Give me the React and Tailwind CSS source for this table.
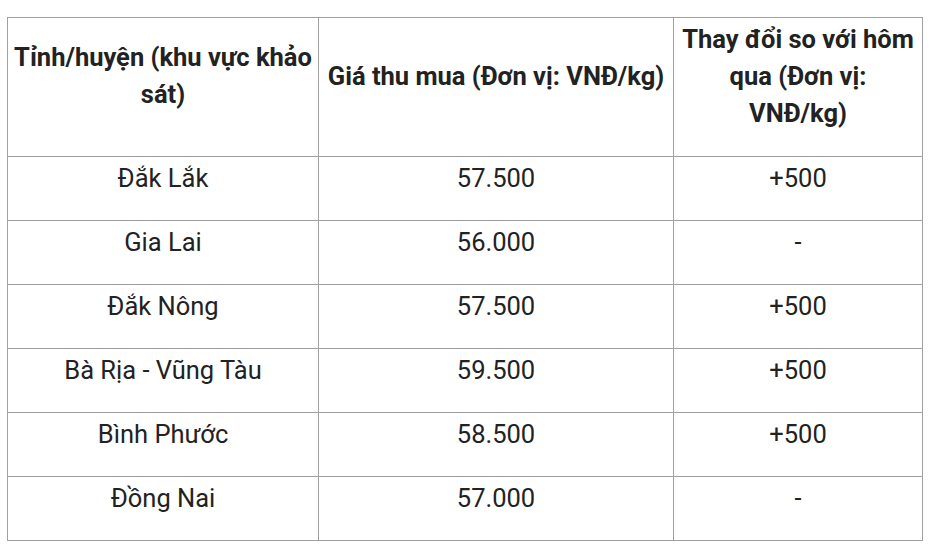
const rows = [
  ['Đắk Lắk', '57.500', '+500'],
  ['Gia Lai', '56.000', '-'],
  ['Đắk Nông', '57.500', '+500'],
  ['Bà Rịa - Vũng Tàu', '59.500', '+500'],
  ['Bình Phước', '58.500', '+500'],
  ['Đồng Nai', '57.000', '-'],
];

export default function App() {
  return (
    <div
      className="w-[933px] h-[546px] bg-white pl-[7px] pt-[17px] text-[#222]"
      style={{ fontFamily: 'Roboto, "Noto Sans", sans-serif' }}
    >
      <table className="w-[915px] table-fixed border-collapse">
        <colgroup>
          <col className="w-[311px]" />
          <col className="w-[355px]" />
          <col className="w-[249px]" />
        </colgroup>
        <thead>
          <tr className="h-[139px]">
            <th className="border border-[#a0a0a0] px-1 pt-[2px] pb-[24px] text-[25.5px] leading-[37px] font-bold text-center align-middle">
              Tỉnh/huyện (khu vực khảo sát)
            </th>
            <th className="border border-[#a0a0a0] px-1 pt-[2px] pb-[24px] text-[25.5px] leading-[37px] font-bold text-center align-middle">
              Giá thu mua (Đơn vị: VNĐ/kg)
            </th>
            <th className="border border-[#a0a0a0] px-1 pt-[2px] pb-[24px] text-[25.5px] leading-[37px] font-bold text-center align-middle">
              Thay đổi so với hôm qua (Đơn vị: VNĐ/kg)
            </th>
          </tr>
        </thead>
        <tbody>
          {rows.map((r) => (
            <tr key={r[0]} className="h-[64px]">
              {r.map((c, i) => (
                <td
                  key={i}
                  className="border border-[#a0a0a0] px-1 pt-[3px] pb-[24px] text-[25.5px] leading-[36px] text-center align-middle"
                >
                  {c}
                </td>
              ))}
            </tr>
          ))}
        </tbody>
      </table>
    </div>
  );
}
